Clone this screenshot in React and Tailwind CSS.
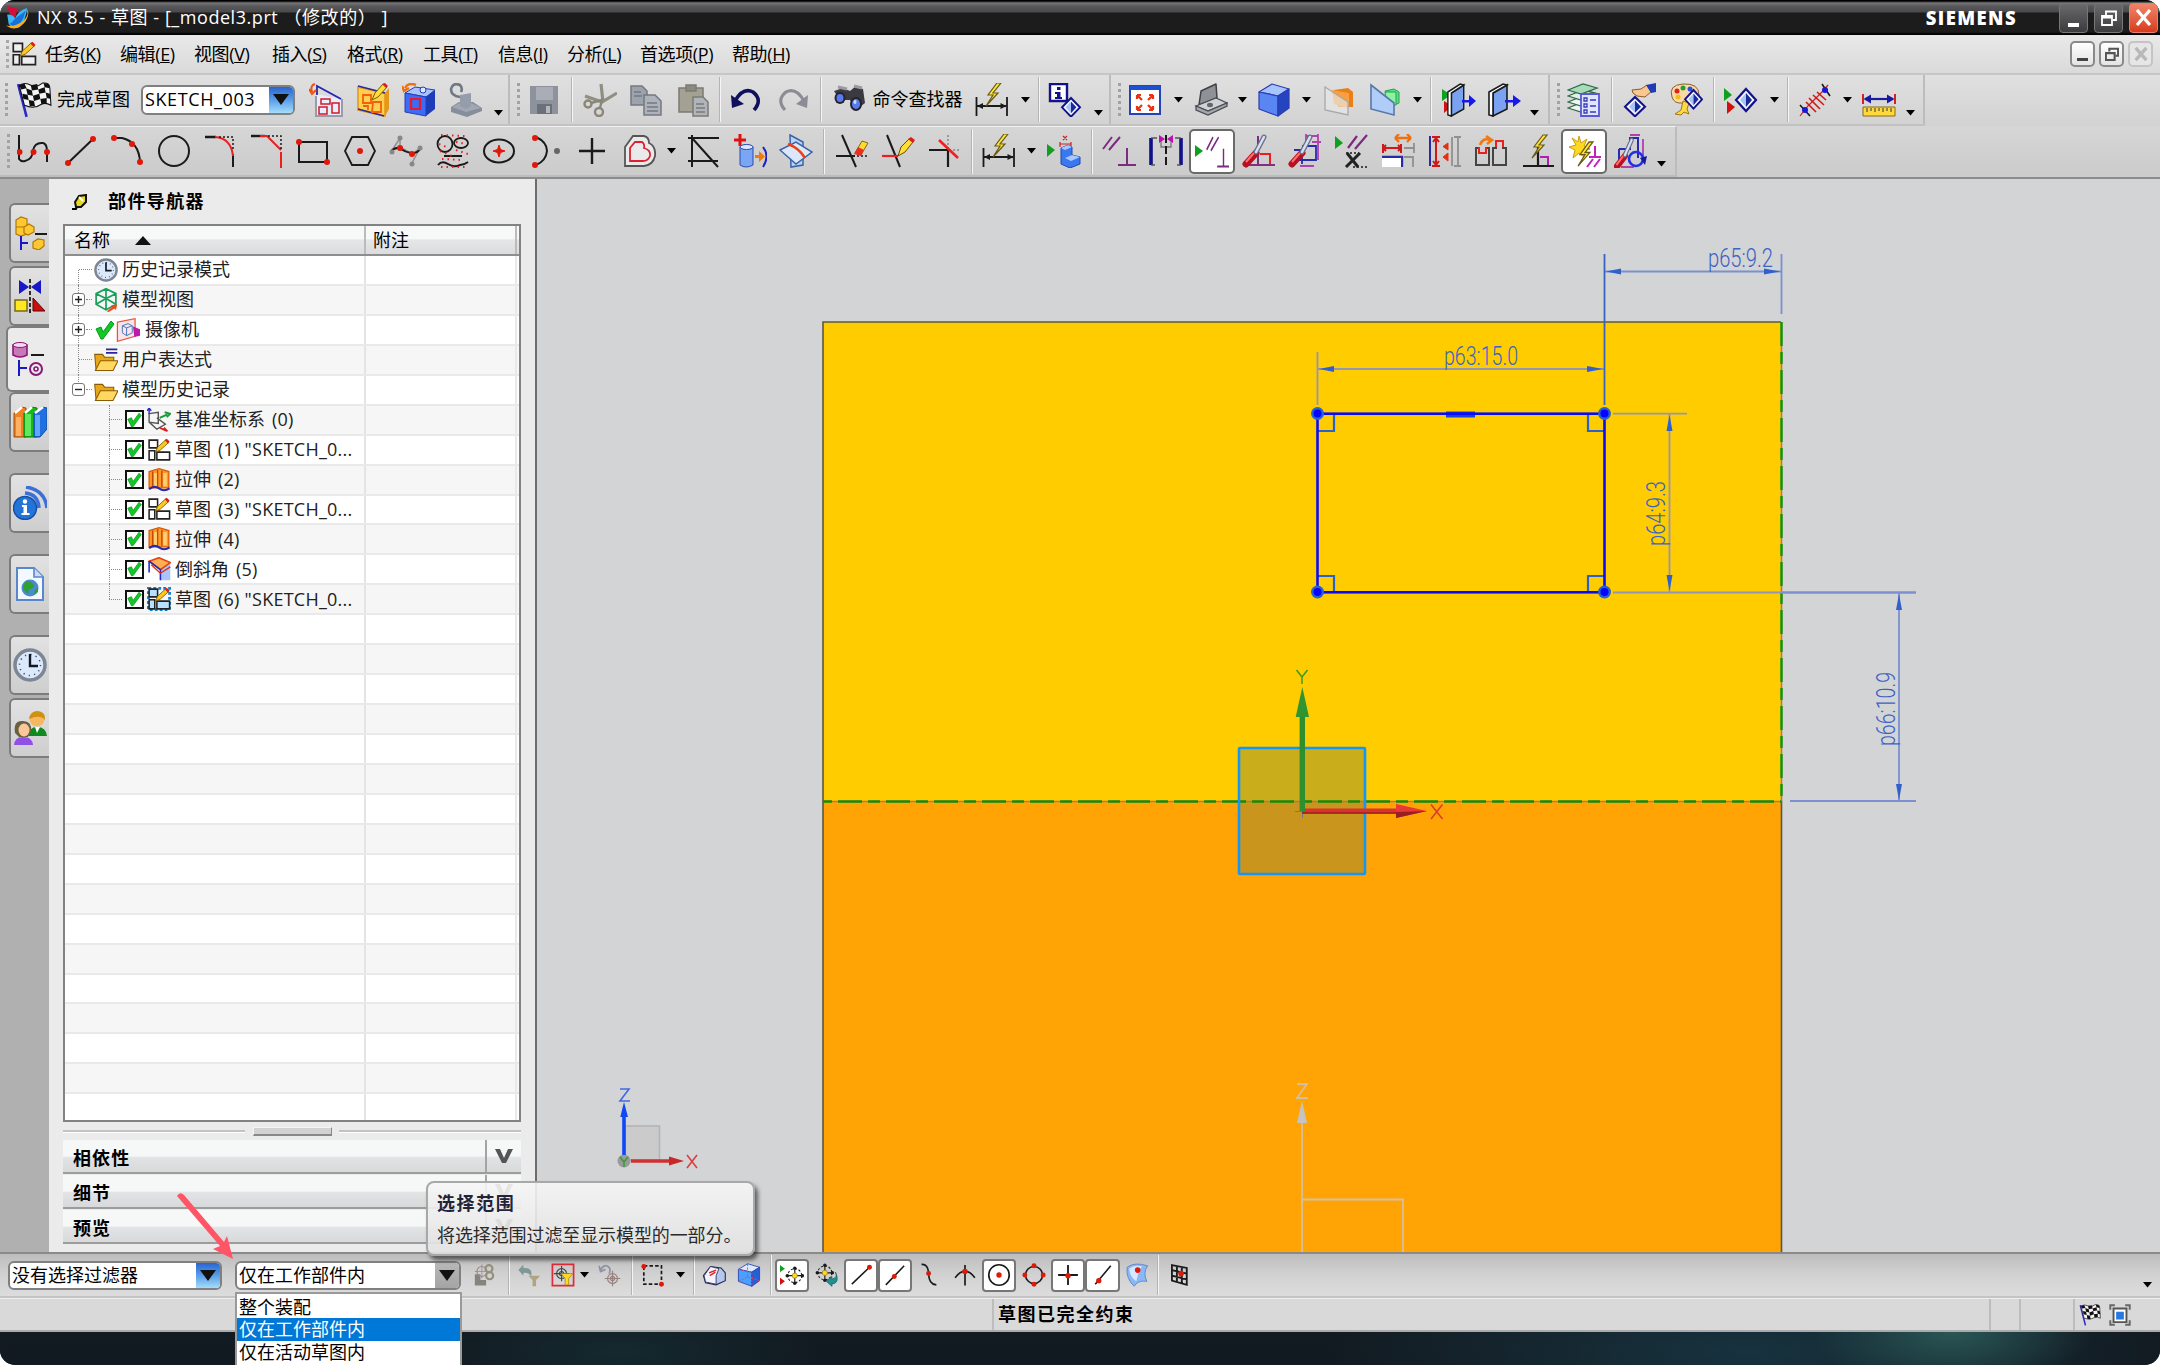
import React from "react";

/* ---------- drawing helpers ---------- */
const Svg = ({ s = 34, className = "", children }) => (
  <svg width={s} height={s} viewBox="0 0 34 34" fill="none" className={"shrink-0 " + className}>
    {children}
  </svg>
);
const Dot = ({ x, y, r = 3, c = "#e01808" }) => <circle cx={x} cy={y} r={r} fill={c} />;
const K = "#1a1a1a";
const Bolt = ({ t }) => (
  <path d="M22 0 L13 12 L18 12 L11 23 L23 10 L18 10 L26 0 Z" fill="#ffe83a" stroke="#6b5a10" strokeWidth="1.2" transform={t} />
);
const Para = ({ t, c = "#7d2a80" }) => (
  <path d="M1 15 L10 3 M7 16 L18 3 M25 14 V31 M16 31 H34" stroke={c} strokeWidth="2" transform={t} />
);
const Diamond = ({ t }) => (
  <g transform={t}>
    <path d="M10 0 L20 11 L10 22 L0 11 Z" fill="#f4f8ff" stroke="#12128a" strokeWidth="2.2" />
    <path d="M10 4 V18 L4 11 Z" fill="#a8c4f4" />
    <path d="M10 4 V18 L16 11 Z" fill="#1a2a9a" />
  </g>
);
const Driver = ({ t }) => (
  <g transform={t}>
    <path d="M4 30 L14 19" stroke="#b81020" strokeWidth="7" strokeLinecap="round" />
    <path d="M4 28 L12 19" stroke="#ff7070" strokeWidth="2" />
    <path d="M14 18 L22 3" stroke="#66708c" strokeWidth="5" strokeLinecap="round" />
    <path d="M14 18 L22 3" stroke="#d8e0f0" strokeWidth="2.5" strokeLinecap="round" />
  </g>
);
const DimBolt = () => (
  <>
    <path d="M1.500 14 V33 M32 14 V33 M2 23 H31" stroke={K} strokeWidth="1.800" />
    <path d="M2 23 L8 20 V26 Z M31.500 23 L25.500 20 V26 Z" fill={K} />
    <Bolt />
  </>
);
const Flag = () => (
  <>
    <path d="M2 2 L10 33" stroke="#2a2ac8" strokeWidth="2.400" />
    <path d="M3 3 Q9 0 14 3 T25 1 Q32 0 32 6 L33 22 Q28 19 24 21 Q17 26 8 22 Z" fill="#f4f4f4" stroke="#111" />
    <path d="M3 3 L8 1.500 L10 6 L5 7 Z M14 3 L20 2 L21 7 L15 8 Z M26 1 L31 2 L32 6 L27 5 Z M9.500 6 L15 8 L16 13 L11 12 Z M21 7 L27 5 L28 10 L22 11 Z M6 11 L11 12 L12 17 L7 16 Z M16 13 L22 11 L23 16 L17 18 Z M28 10 L32 11 L33 16 L29 15 Z M12 17 L17 18 L18 23 L13 23 Z M23 16 L29 15 L29 20 L24 21 Z" fill="#111" />
  </>
);
const SketchGlyph = ({ bg = "#fff", hot }) => (
  <>
    {hot && <path d="M2 2 H32 V32 H2 Z" stroke="#0a84d8" strokeWidth="4" strokeDasharray="4 3" />}
    <path d="M3 3 H15 V14 H3 Z M3 18 H11 V31 H3 Z M14 20 H32 V31 H14 Z" fill={hot ? "#b8e0ff" : bg} stroke="#222" strokeWidth="2.200" />
    <path d="M12 20 L15 13 L26 3 L30 7 L19 17 Z" fill="#ffc820" stroke="#7a5a08" strokeWidth="1.200" />
    <path d="M25 3 L28 1 L32 5 L30 8 Z" fill="#d82020" />
  </>
);
const Clock = () => (
  <>
    <circle cx="17" cy="17" r="15" fill="#dce9fa" stroke="#7d8694" strokeWidth="3.500" />
    <circle cx="17" cy="17" r="10.500" stroke="#3a4a66" strokeWidth="1.500" strokeDasharray="1.200 4.300" />
    <path d="M17 6 V18 H25" stroke="#101828" strokeWidth="2.400" />
  </>
);
const Cube = ({ a = "#a8c4ff", b = "#5a86f4", c = "#2444c0" }) => (
  <g stroke="#2a3cb4" strokeWidth="1.200" strokeLinejoin="round">
    <path d="M2 9 L15 1 L32 6 L21 13 Z" fill={a} />
    <path d="M2 9 L21 13 V33 L2 26 Z" fill={b} />
    <path d="M21 13 L32 6 V25 L21 33 Z" fill={c} />
  </g>
);
const Book = () => (
  <>
    <path d="M5 10 L19 2 V26 L5 33 Z" fill="#7aa2f0" stroke={K} strokeWidth="1.600" />
    <path d="M1 9 L15 1 L19 2 L5 10 V33 L1 32 Z" fill="#fff" stroke={K} strokeWidth="1.600" />
    <path d="M17 17 H25 V12 L33 18 L25 24 V19.500 H17 Z" fill="#1818e8" />
  </>
);
const Target = ({ c = "#8a8a8a" }) => (
  <g stroke={c} strokeWidth="1.600">
    <circle cx="22" cy="22" r="7" />
    <circle cx="22" cy="22" r="3" />
    <path d="M22 11 V33 M11 22 H33" />
  </g>
);
const Compass = ({ t }) => (
  <g transform={t}>
    <circle cx="17" cy="17" r="12" stroke={K} strokeWidth="1.800" strokeDasharray="4 3" />
    <path d="M17 3 V31 M3 17 H31" stroke={K} strokeWidth="2" />
    <Dot x={17} y={4} c={K} /><Dot x={17} y={30} c={K} /><Dot x={4} y={17} c={K} /><Dot x={30} y={17} c={K} />
    <circle cx="17" cy="17" r="4.500" fill="#ffd820" stroke="#8a7010" />
  </g>
);

/* ---------- icons by name ---------- */
const I = {
  reattach: (<>
    <path d="M7 11 V32 H32 V16 Z" fill="#e9edfa" />
    <path d="M7 13 V33 H33 V16" stroke="#9a9aa8" strokeWidth="2" />
    <path d="M8 12 V3 L32 16" stroke="#2424b4" strokeWidth="1.800" />
    <path d="M12 16 H21 V21 H12 Z M23 20 H30 V30 H23 Z M10 24 H18 V31 H10 Z" stroke="#d01828" strokeWidth="1.500" />
    <path d="M6 1 Q1 2 3 9 M0 6 L3 11 L7 7" stroke="#f05010" strokeWidth="2" />
  </>),
  orient: (<>
    <path d="M2 4 L29 10 V33 L2 27 Z" fill="#ffd050" stroke="#e8a020" strokeWidth="1.800" />
    <path d="M2 3 L29 10 M2 26 L28 33" stroke="#2a2a9a" strokeWidth="1.500" />
    <path d="M29 10 L33 5 V26 L29 33 Z" fill="#e89818" />
    <path d="M7 12 H15 V20 H7 Z M7 23 H12 V27 M17 19 H25 V29 H16 Z" stroke="#f06010" strokeWidth="1.800" />
    <path d="M16 17 L19 10 L27 1 L31 4 L22 14 Z" fill="#ffe030" stroke="#7a5a08" />
    <path d="M26 1 L29 0 L32 3 L30 5 Z" fill="#d82020" />
  </>),
  cubeSketch: (<>
    <path d="M3 10 L13 4 L33 7 L24 14 Z" fill="#a8c4ff" stroke="#2a3cb4" />
    <path d="M3 10 L24 14 V33 L3 29 Z" fill="#3a6cf4" stroke="#2a3cb4" />
    <path d="M24 14 L33 7 V26 L24 33 Z" fill="#1c3cb8" />
    <path d="M9 16 H18 V26 H9 Z" stroke="#e81830" strokeWidth="2.200" />
    <path d="M14 2 Q6 -1 3 5 M0 3 L2 8 L7 5" stroke="#f07010" strokeWidth="2.400" />
    <circle cx="21" cy="7" r="3" fill="#d8e8ff" stroke="#2a3cb4" />
  </>),
  stampGray: (<>
    <path d="M2 24 L10 19 H24 L33 25 V28 L18 34 L2 29 Z" fill="#868e9b" />
    <path d="M3 24 L17 29 L32 25 L22 20 H11 Z" fill="#a0a8b4" />
    <path d="M11 12 L22 10 V23 L17 26 L11 23 Z" fill="#959dab" />
    <path d="M11 14 Q2 13 2 6 Q4 -1 11 2 Q14 5 12 9" stroke="#6f7784" strokeWidth="2.600" />
  </>),
  save: <><path d="M3 3 H31 V31 H3 Z" fill="#8d929c" /><path d="M9 4 H26 V17 H9 Z" fill="#a9adb6" /><path d="M10 21 H25 V31 H10 Z" fill="#6c7179" /><path d="M19 23 H23 V30 H19 Z" fill="#b4b8be" /></>,
  cut: (<>
    <path d="M18 1 L20 19 M34 10 L19 19 L2 13" stroke="#8f8f84" strokeWidth="3.200" />
    <circle cx="5" cy="21" r="3.500" stroke="#8a8778" strokeWidth="2.400" /><circle cx="16" cy="29" r="4" stroke="#8a8778" strokeWidth="2.400" />
    <path d="M8 20 L19 17 L17 25" stroke="#8a8778" strokeWidth="2.400" />
  </>),
  copy: <g stroke="#74797f" strokeWidth="1.500"><path d="M2 3 H13 L18 8 V22 H2 Z" fill="#9ca2ae" /><path d="M15 12 H26 L32 18 V32 H15 Z" fill="#adb2bc" /><path d="M18 20 H28 M18 24 H29 M18 28 H29 M5 9 H12 M5 13 H13" /></g>,
  paste: <g stroke="#7b7b70" strokeWidth="1.500"><path d="M3 5 H27 V29 H3 Z" fill="#a3a193" /><path d="M10 2 H20 V8 H10 Z" fill="#8b8a80" /><path d="M17 14 H27 L32 19 V33 H17 Z" fill="#b0b4bc" /><path d="M20 21 H28 M20 25 H29 M20 29 H29" /></g>,
  undo: <><path d="M6 18 Q14 4 24 9 Q34 17 25 27" stroke="#10105c" strokeWidth="3.600" /><path d="M2 12 L3 25 L15 21 Z" fill="#10105c" /></>,
  redo: <><path d="M28 18 Q20 4 10 9 Q0 17 9 27" stroke="#8c8c96" strokeWidth="3.200" /><path d="M32 12 L31 25 L20 21 Z" fill="#8c8c96" /></>,
  binoc: (<>
    <path d="M2 8 L11 5 L18 8 L24 3 L31 6 L33 20 L24 27 L18 17 L8 17 Z" fill="#3a3a40" />
    <path d="M6 4 L15 6 M22 3 L30 5" stroke="#9a9aa0" strokeWidth="3" />
    <ellipse cx="8" cy="15" rx="5.500" ry="6" fill="#23232c" /><ellipse cx="8" cy="15" rx="3.500" ry="4" fill="#5a7af0" />
    <ellipse cx="24" cy="21" rx="6" ry="7" fill="#23232c" /><ellipse cx="24" cy="21" rx="4" ry="5" fill="#5a7af0" /><ellipse cx="23" cy="19" rx="1.500" ry="2" fill="#cfdcff" />
  </>),
  dimBolt: <DimBolt />,
  info: <><path d="M2 1 H19 V18 H2 Z" fill="#fff" stroke="#12128a" strokeWidth="2.400" /><path d="M9 4 H12.500 V7 H9 Z M7 9 H12.500 V14 H14 V16 H7 V14 H9 V11 H7 Z" fill="#12128a" /><Diamond t="translate(14 15) scale(.9 .85)" /></>,
  fit: (<>
    <path d="M2 3 H32 V31 H2 Z" fill="#fff" stroke="#2344b8" strokeWidth="2" /><path d="M2 3 H32 V7 H2 Z" fill="#1c50d0" />
    <path d="M9 12 L14 17 M9 12 h4 M9 12 v4 M25 12 L20 17 M25 12 h-4 M25 12 v4 M9 27 L14 22 M9 27 h4 M9 27 v-4 M25 27 L20 22 M25 27 h-4 M25 27 v-4" stroke="#f03010" strokeWidth="2.200" />
  </>),
  clip: (<>
    <path d="M5 22 L7 8 L22 1 L23 15 Z" fill="#8e9296" stroke="#3e4248" strokeWidth="1.500" strokeLinejoin="round" />
    <path d="M2 23 L22 15 L33 20 L14 28 Z" fill="#cfd2d6" stroke="#4a4e54" strokeWidth="1.300" />
    <path d="M2 23 L14 28 L33 20 V23 L14 32 L2 27 Z" fill="#a4a8ad" stroke="#4a4e54" strokeWidth="1.300" />
    <ellipse cx="16" cy="22" rx="3" ry="2.200" fill="#666" />
  </>),
  cube: <Cube />,
  planeOrange: (<>
    <path d="M12 7 L26 5 L31 9 V24 H16 Z" fill="#e88018" /><path d="M10 7 L27 10 V25 L12 21 Z" fill="#f8a040" />
    <path d="M3 4 L26 19 V32 L3 27 Z" fill="#e8e8e8" fillOpacity=".65" stroke="#a8a8a8" strokeWidth="1.300" />
  </>),
  planeGreen: (<>
    <path d="M17 8 L26 6 L31 9 V20 L22 24 Z" fill="#58e080" stroke="#28a050" /><path d="M17 9 H28 V22 H19 Z" fill="#8af4a4" stroke="#28a050" />
    <path d="M3 2 L26 20 V32 L3 26 Z" fill="#b0ccf8" stroke="#5878a8" strokeWidth="1.600" />
  </>),
  bookPlay: <><path d="M0 6 L9 12 L0 18 Z" fill="#10a020" /><path d="M2 18 L10 23 L2 30 Z" fill="#d01010" /><g transform="translate(5 0) scale(.88 1)"><Book /></g></>,
  book: <Book />,
  layers: (<>
    <g stroke="#2f6a48" strokeWidth="1.300"><path d="M1 25 L16 19 L28 22 L14 29 Z" fill="#eef6f0" /><path d="M1 19 L16 13 L28 16 L14 23 Z" fill="#eef6f0" /><path d="M1 13 L16 7 L28 10 L14 17 Z" fill="#dff0e4" /><path d="M1 7 L16 1 L30 5 L14 11 Z" fill="#a8dcb8" /></g>
    <path d="M14 11 H32 V33 H14 Z" fill="#e0e6ff" stroke="#5858d8" strokeWidth="1.800" />
    <path d="M17 15 h3 v3 h-3 Z M17 21 h3 v3 h-3 Z M17 27 h3 v3 h-3 Z M23 17 h6 M23 23 h6 M23 29 h6" stroke="#3a3ab8" strokeWidth="1.300" />
  </>),
  hand: <><path d="M9 7 L18 6 L24 2 L29 8 L22 14 L14 13 L10 10 Z" fill="#f8c890" stroke="#8a5a2a" /><path d="M23 2 L33 0 V9 L28 10 Z" fill="#1c3cb8" /><Diamond t="translate(2 14) scale(1 .88)" /></>,
  palette: (<>
    <path d="M3 14 Q-1 2 14 1 Q30 0 30 12 Q27 18 22 16 Q16 16 14 20 Q5 21 3 14 Z" fill="#fbd9a4" stroke="#8a6030" />
    <Dot x={8} y={8} c="#e02020" r={2.500} /><Dot x={14} y={5} c="#20a030" r={2.500} /><Dot x={21} y={6} c="#2850e0" r={2.500} /><Dot x={9} y={14} c="#f0c010" r={2.500} />
    <path d="M14 18 L20 20 L18 26 L20 31 L15 29 L12 32 L6 31 L12 27 Z" fill="#ffd840" stroke="#a07810" />
    <Diamond t="translate(16 7) scale(.85 .85)" />
  </>),
  playDia: <><path d="M0 5 L8 12 L0 18 Z" fill="#10a020" /><path d="M3 18 L11 24 L3 31 Z" fill="#d01010" /><Diamond t="translate(12 6)" /></>,
  curveRed: (<>
    <path d="M2 33 L10 23 L24 9 L30 2" stroke="#e01818" strokeWidth="1.200" /><path d="M8 19 L18 29 M11 15 L22 26 M15 12 L26 22 M19 9 L28 17" stroke="#d01818" strokeWidth="1.600" />
    <path d="M2 22 L12 33 M24 1 L32 13" stroke={K} strokeWidth="1.600" /><Dot x={7} y={27} c="#1818d8" /><Dot x={27} y={7} c="#1818d8" />
  </>),
  ruler: (<>
    <path d="M1 11 V21 M33 11 V21" stroke="#d01010" strokeWidth="1.800" /><path d="M3 16 H31" stroke="#1818a0" strokeWidth="2.200" /><path d="M1.500 16 L9 11.500 V20.500 Z M32.500 16 L25 11.500 V20.500 Z" fill="#1818a0" />
    <path d="M1 24 H33 V33 H1 Z" fill="#ffd83a" stroke="#8a6a10" /><path d="M5 25 v4 M9 25 v3 M13 25 v4 M17 25 v3 M21 25 v4 M25 25 v3 M29 25 v4" stroke="#333" />
  </>),
  profile: <><path d="M2 1 V25 Q4 28 8 27 Q16 25 16 16 Q18 8 26 9 Q30 10 30 17 V28" stroke={K} strokeWidth="2" /><Dot x={2.500} y={18} /><Dot x={16.500} y={18} /><Dot x={30} y={18} /></>,
  line: <><path d="M4 29 L29 5" stroke={K} strokeWidth="2" /><Dot x={4} y={29} /><Dot x={29} y={5} /></>,
  arc: <><path d="M3 4 H12 Q29 8 30 28" stroke={K} strokeWidth="2" /><Dot x={4} y={4} /><Dot x={22} y={10} /><Dot x={30} y={28} /></>,
  circle: <circle cx="17" cy="17" r="15" stroke={K} strokeWidth="2" />,
  fillet: <><path d="M2 3 H13" stroke={K} strokeWidth="2.400" /><path d="M30 20 V33" stroke={K} strokeWidth="2" /><path d="M12 3 Q28 4 30 22" stroke="#e82020" strokeWidth="2" /><path d="M16 3 H30 V15" stroke={K} strokeWidth="1.500" strokeDasharray="2 2" /></>,
  chamfer: <><path d="M1 2 H15" stroke={K} strokeWidth="2.400" /><path d="M31 18 V34" stroke="#e82020" strokeWidth="2" /><path d="M10 2 H17 L31 16" stroke="#e82020" strokeWidth="2" /><path d="M18 2 H31 V15" stroke={K} strokeWidth="1.500" strokeDasharray="2 2" /></>,
  rect: <><path d="M3 8 H31 V28 H3 Z" stroke={K} strokeWidth="2" /><Dot x={3} y={8} /><Dot x={31} y={28} /></>,
  hex: <><path d="M9 3 H25 L32 17 L25 31 H9 L2 17 Z" stroke={K} strokeWidth="1.800" /><Dot x={17} y={17} /></>,
  spline: <><path d="M2 18 L11 4 L11 13 L23 20 L31 14 L23 29" stroke="#909090" strokeWidth="1.500" /><path d="M2 17 Q8 12 12 15 T22 19 T32 14" stroke={K} strokeWidth="2" /><Dot x={11} y={14} /><Dot x={23} y={20} /><Dot x={11} y={4} c="#888" r={2.500} /><Dot x={31} y={14} c="#888" r={2.500} /><Dot x={23} y={30} c="#888" r={2.500} /><Dot x={3} y={18} c="#888" r={2.500} /></>,
  fitCurve: <><ellipse cx="9" cy="10" rx="7.500" ry="8" stroke={K} strokeWidth="1.800" /><ellipse cx="25" cy="9" rx="7" ry="5" stroke={K} strokeWidth="1.800" /><path d="M8 22 H26 M2 31 Q6 26 12 30 T24 31 Q28 31 32 28" stroke={K} strokeWidth="2" /><path d="M5 1 l24 1 M3 10 l10 4 M20 8 l10 2 M4 17 l12 5 M20 16 l12 4 M6 25 l20 1 M5 33 l26 0" stroke="#e82020" strokeWidth="2" strokeDasharray="1.500 4" /></>,
  ellipse: <><ellipse cx="17" cy="17" rx="15" ry="11.500" stroke={K} strokeWidth="2" /><path d="M17 11 L18.500 15.500 L23 17 L18.500 18.500 L17 23 L15.500 18.500 L11 17 L15.500 15.500 Z" fill="#e01808" stroke="#e01808" /></>,
  conic: <><path d="M7 3 Q18 8 18 17 Q17 27 7 31" stroke={K} strokeWidth="2" /><Dot x={6} y={4} /><Dot x={6} y={31} /><Dot x={28} y={17} c="#666" /></>,
  plus: <path d="M17 4 V30 M4 17 H30" stroke={K} strokeWidth="2.400" />,
  offset: <><path d="M3 32 V13 L11 2 H22 Q27 3 27 9 Q34 12 33 22 Q31 31 22 32 Z" fill="#eaeaea" stroke="#555" strokeWidth="1.800" /><path d="M8 27 V14 L13 8 H20 Q23 10 22 14 Q29 16 28 22 Q26 27 21 27 Z" stroke="#e02030" strokeWidth="1.800" /></>,
  pattern: <path d="M6 1 V33 M2 4 H33 M2 27 H32 M6 4 L32 33" stroke={K} strokeWidth="2" />,
  mirrorPlus: <><path d="M7 0 V12 M1 6 H13" stroke="#e01010" strokeWidth="3" /><path d="M7 13 Q13 9 20 13 V31 Q13 35 7 31 Z" fill="#7aa6f4" stroke="#2a4ab0" /><ellipse cx="13.500" cy="13" rx="6.500" ry="2.500" fill="#dce8ff" stroke="#2a4ab0" /><path d="M22 21 H26 V17 L32 22.500 L26 28 V24 H22 Z" fill="#f07a10" /><path d="M30 13 Q37 22 30 33" stroke="#2020c0" strokeWidth="2" /></>,
  intersect: <><path d="M11 1 L24 8 V31 L12 33 Z" fill="#b8d4f8" stroke="#3a64a8" strokeWidth="1.500" /><path d="M1 16 L17 8 L33 18 L17 30 Z" fill="#dce8fa" stroke="#3a64a8" strokeWidth="1.500" /><path d="M9 10 Q20 14 26 24" stroke="#f04010" strokeWidth="2.600" /></>,
  trim: <><path d="M7 1 L21 33 M1 22 H20" stroke={K} strokeWidth="2" /><path d="M22 22 H34" stroke={K} strokeWidth="1.500" strokeDasharray="2 2" /><path d="M20 19 L27 7 L33 9 L26 21 Z" fill="#ffd830" stroke="#8a6a10" /><path d="M19 20 L23 13 L29 16 L26 22 Z" fill="#e83020" /></>,
  extend: <><path d="M6 1 L19 33" stroke={K} strokeWidth="2" /><path d="M1 22 H17" stroke="#e82020" strokeWidth="2.200" /><path d="M17 22 L20 13 L28 5 L32 8 L24 18 Z" fill="#ffe030" stroke="#6a4a08" /><path d="M27 5 L30 3 L34 6 L32 9 Z" fill="#d82020" /></>,
  corner: <><path d="M1 16 H20 M20 16 V33" stroke={K} strokeWidth="2.200" /><path d="M20 1 V16 H32" stroke="#888" strokeWidth="1.500" strokeDasharray="2 2" /><path d="M11 6 L30 24" stroke="#f02020" strokeWidth="2.600" /></>,
  dimPart: <><path d="M0 10 L8 16 L0 23 Z" fill="#10a020" /><path d="M13 10 H24 M13 8 v5 M24 8 v5 M16 2 l4 4 M20 2 l-4 4" stroke="#d02020" strokeWidth="1.200" /><path d="M14 14 L21 11 L25 13 V21 L33 23 V30 L23 34 L14 30 Z" fill="#3a78f0" stroke="#1c48b0" strokeLinejoin="round" /><path d="M14 14 L21 11 L25 13 L18 16 Z M18 24 L25 21 L33 23 L24 27 Z" fill="#a8c8ff" /></>,
  para: <Para />,
  sym: <><path d="M2 4 V31 M32 4 V31" stroke="#10108a" strokeWidth="3.600" /><path d="M2 4 H8 M26 4 H32 M2 31 H6 M28 31 H32" stroke="#555" strokeWidth="1.500" /><path d="M12 4 V13 H22 V4" stroke="#777" strokeWidth="1.300" /><path d="M17 1 V34" stroke={K} strokeWidth="2" strokeDasharray="8 3" /><path d="M10 1 L16 5 L10 9 Z M24 1 L18 5 L24 9 Z" fill="#c010b0" /></>,
  paraPlay: <><path d="M0 11 L8 17 L0 23 Z" fill="#10a020" /><Para t="translate(11 0) scale(.7 1.050)" /></>,
  driverAngle: <><path d="M16 2 V31 M2 31 H33" stroke="#803080" strokeWidth="2" /><path d="M18 20 H28 V30" stroke="#e82020" strokeWidth="2" /><Driver /></>,
  driverDim: <><path d="M6 16 H14 V30 M14 12 H28 V26 H6" stroke="#2a2ab0" strokeWidth="1.800" /><path d="M18 2 H30 M18 0 v8 M30 0 V26 M24 8 H33 M12 32 H26" stroke="#b040b0" strokeWidth="1.800" /><Driver /></>,
  paraX: <><path d="M0 2 L8 9 L0 15 Z" fill="#10a020" /><path d="M13 14 L22 2 M20 15 L32 1" stroke="#7d2a80" strokeWidth="2.200" /><path d="M12 19 L23 33 M25 19 L11 33" stroke="#222" strokeWidth="3" /><path d="M11 19 H24 M18 33 H34" stroke={K} strokeDasharray="2 2" strokeWidth="1.500" /></>,
  dimAlt: <><path d="M14 4 H30 M14 4 l4 -4 M14 4 l4 4 M30 4 l-4 -4 M30 4 l-4 4" stroke="#f07010" strokeWidth="2.400" /><path d="M2 10 V19 M20 10 V19 M2 14 H20 M5 11 l-3 3 l3 3 M17 11 l3 3 l-3 3" stroke="#d01818" strokeWidth="2" /><path d="M1 23 H21 V33" stroke="#2a2aa8" strokeWidth="2.400" /><path d="M1 24 H20 V33 H1 Z" fill="#fff" /><path d="M23 14 H33 M33 9 V19 M23 23 H32 V33" stroke="#909090" strokeWidth="1.800" /></>,
  dimVert: <><path d="M2 2 V32" stroke="#2a2aa8" strokeWidth="2" /><path d="M4 3 H12 M4 32 H12 M8 3 V32 M5 8 l3 -4 l3 4 M5 27 l3 4 l3 -4" stroke="#d01818" strokeWidth="2" /><path d="M20 9 V16 L15 12.500 Z M20 19 V27 L15 23 Z" fill="#e83010" stroke="#e83010" /><path d="M26 3 H33 M26 32 H33 M30 3 V32 M24 3 V32" stroke="#909090" strokeWidth="1.800" /></>,
  shapes: <><path d="M2 14 H5 V19 H12 V14 H15 V31 H2 Z M19 31 V14 H22 V7 H29 V14 H32 V31 Z" stroke="#444" strokeWidth="2" /><path d="M5 13 V19 H12 V13 M22 13 V7 H29 V13" stroke="#e82020" strokeWidth="2" /><path d="M6 11 Q9 3 16 6 M12 2 L18 6 L13 10" stroke="#f07a10" strokeWidth="2.600" /></>,
  boltAngle: <><path d="M2 32 H33 M17 12 V32" stroke={K} strokeWidth="2.200" /><path d="M19 23 H27 V31" stroke="#b020b0" strokeWidth="2" /><Bolt t="translate(0 1)" /></>,
  sun: <><path d="M12 2 L14 9 L20 5 L17 12 L23 15 L16 17 L18 24 L12 19 L6 24 L8 16 L2 13 L9 11 L5 4 L11 8 Z" fill="#ffd820" stroke="#c8a010" /><Bolt t="translate(0 8) scale(1 1.050)" /><path d="M28 12 V23 M22 23 H34 M20 33 L26 25 M27 33 L33 25" stroke="#c020c0" strokeWidth="2" /></>,
  driverCirc: <><path d="M5 15 V30 M5 15 H16 V4 H24 V24" stroke="#2a2ab0" strokeWidth="2" /><path d="M16 1 H26 M29 5 V28 M7 33 H20" stroke="#b040b0" strokeWidth="1.800" /><circle cx="22" cy="25" r="7" stroke="#2030e8" strokeWidth="2.600" /><path d="M26 24 L33 22 L31 31 Z" fill="#1818a0" /><Driver t="translate(-1 3) scale(.85 1)" /></>,
  selGray: <><path d="M4 16 H12 V24 H20 V32 H4 Z" fill="#85857f" /><circle cx="14" cy="12" r="7" stroke="#a08888" strokeWidth="1.500" /><path d="M14 2 V22 M4 12 H24" stroke="#998080" /><circle cx="24" cy="8" r="5" stroke="#94907c" strokeWidth="3" /><circle cx="25" cy="18" r="5" stroke="#94907c" strokeWidth="3" /></>,
  funnelGray: <><path d="M2 10 L9 2 V7 Q23 6 20 19 Q17 13 9 14 V18 Z" fill="#7f9895" /><path d="M16 18 H33 L27 24 V33 H22 V24 Z" fill="#b0a484" /></>,
  funnelRed: <><path d="M2 2 H32 V32 H2 Z" stroke="#e02838" strokeWidth="2.400" /><g transform="translate(-7 -7)"><Target c="#444" /></g><path d="M14 15 H31 L25 22 V31 H20 V22 Z" fill="#ffd820" stroke="#a08010" /></>,
  undoTarget: <><path d="M5 10 Q10 0 17 6 Q20 10 17 15 M3 4 L5 12 L12 9" stroke="#9090a4" strokeWidth="2.400" /><Target c="#988080" /></>,
  marquee: <><path d="M4 4 H29 V30 H4 Z" stroke={K} strokeWidth="2.400" strokeDasharray="5 3" /><Dot x={4} y={5} r={3.500} /><Dot x={29} y={30} r={3.500} /></>,
  solidA: <><path d="M2 18 L12 5 L27 7 L33 14 V25 L20 31 L5 28 Z" fill="#b4c8ec" stroke="#2a2a5a" strokeWidth="1.600" /><path d="M3 18 L12 5 L24 8 L20 18 V30 L5 27 Z" fill="#f2f4fc" stroke="#2a2a5a" strokeWidth="1.200" /><path d="M10 14 L20 10 M11 18 L19 13" stroke="#e02020" strokeWidth="2" /></>,
  solidB: <><Cube a="#d8ecff" b="#4aa0ff" c="#2460d8" /><path d="M2 9 L21 13 V33 M2 26 L15 20 V1 M15 20 L32 25" stroke="#e04868" strokeWidth="1.400" strokeDasharray="3 2" /></>,
  snapOn: <><path d="M0 3 L7 8 L0 13 Z" fill="#10a020" /><path d="M0 21 L7 26 L0 31 Z" fill="#d01010" /><Compass t="translate(7 4) scale(.82)" /></>,
  snapRot: <><Compass t="translate(0 0) scale(.82)" /><path d="M16 26 L24 19 V23 Q33 20 29 13 Q36 28 24 30 V33 Z" fill="#209090" stroke="#106060" /></>,
  snapEnd: <><path d="M4 30 L29 6" stroke={K} strokeWidth="2.200" /><Dot x={29} y={6} r={3.500} /></>,
  snapMid: <><path d="M4 31 L30 4" stroke={K} strokeWidth="2.200" /><Dot x={16} y={19} r={3.500} /></>,
  snapCtrl: <><path d="M5 2 Q14 1 15 14 Q15 30 26 31" stroke={K} strokeWidth="2.400" /><Dot x={15} y={15} r={3.500} /></>,
  snapInt: <><path d="M17 3 V32 M3 21 Q17 2 31 21" stroke={K} strokeWidth="2.400" /><Dot x={17} y={12} r={3.800} /></>,
  snapCen: <><circle cx="17" cy="17" r="14.500" stroke={K} strokeWidth="2.400" /><Dot x={17} y={17} r={3.800} /></>,
  snapQuad: <><circle cx="17" cy="17" r="12" stroke={K} strokeWidth="2.200" /><Dot x={17} y={4} r={3.500} /><Dot x={17} y={30} r={3.500} /><Dot x={4} y={17} r={3.500} /><Dot x={30} y={17} r={3.500} /></>,
  snapPt: <><path d="M17 3 V31 M3 17 H31" stroke={K} strokeWidth="2.600" /><Dot x={17} y={18} r={3.800} /></>,
  snapCrv: <><path d="M6 30 L28 4" stroke={K} strokeWidth="2.200" /><Dot x={11} y={25} r={3.800} /></>,
  snapFace: <><path d="M3 6 Q14 -2 32 4 Q25 14 31 26 Q18 24 13 33 Q1 22 3 6 Z" fill="#8ab8f4" stroke="#4a74c0" /><path d="M6 8 Q14 2 24 5 Q18 14 16 26 Q7 20 6 8 Z" fill="#d8e8ff" /><Dot x={18} y={10} r={4} /></>,
  gridPt: <><path d="M7 3 L28 7 V31 L7 25 Z M7 10 L28 15 M7 18 L28 23 M14 4 V27 M21 6 V29" stroke={K} strokeWidth="2.600" /><Dot x={20} y={15} r={4} /></>,
};

/* ---------- toolbar pieces ---------- */
const Ico = ({ n, on }) => (
  <div className="flex w-[46.5px] shrink-0 items-center justify-center">
    <div className={on ? "flex h-[45px] w-[46px] shrink-0 items-center justify-center rounded-[5px] border-2 border-[#6a6a6a] bg-white" : "flex"}>
      <Svg>{I[n]}</Svg>
    </div>
  </div>
);
const Tri = ({ low, w = "w-[18px]" }) => (
  <div className={"flex shrink-0 justify-center " + w + (low ? " items-end pb-2" : " items-center")}>
    <svg width="9" height="6" viewBox="0 0 9 6"><path d="M0 0 H9 L4.500 5.500 Z" fill="#000" /></svg>
  </div>
);
const Sep = ({ w = "w-[9px]" }) => (
  <div className={"flex shrink-0 items-center justify-center " + w}>
    <div className="h-[45px] w-[2px] border-l border-[#b4b4b4] bg-[#f6f6f6]" />
  </div>
);
const Grip = ({ w = "w-[11px]" }) => (
  <div className={"flex shrink-0 items-center justify-end " + w}>
    <div className="flex h-[34px] w-[4px] flex-col justify-between">
      {[0, 1, 2, 3, 4, 5].map((i) => <i key={i} className="block h-[3px] w-[3px] bg-[#a2a2a2]" />)}
    </div>
  </div>
);
const Group = ({ w, children }) => (
  <div className={"flex h-full shrink-0 border-r-2 border-[#bcbcbc] " + w}>{children}</div>
);
const many = (list) => list.split(" ").map((n) => <Ico key={n} n={n} />);

const Combo = ({ w, text, blue, tight }) => (
  <div className={"flex shrink-0 overflow-hidden rounded-[6px] border-2 border-[#808080] bg-white " + w}>
    <span className={"min-w-0 flex-1 overflow-hidden whitespace-nowrap pl-[2px] text-[18px] leading-[25px] text-black " + (tight || "")}>{text}</span>
    <span className={"flex w-[24px] items-center justify-center " + (blue ? "bg-linear-to-b from-[#2a64d0] via-[#5a9ee8] to-[#a4dcfa]" : "bg-linear-to-b from-[#b8b8b8] to-[#a4a4a4]")}>
      <svg width="16" height="11" viewBox="0 0 16 11"><path d="M0 0 H16 L8 11 Z" fill="#111" /></svg>
    </span>
  </div>
);

const menus = [
  ["任务", "K", "w-[75px]"], ["编辑", "E", "w-[74px]"], ["视图", "V", "w-[78px]"], ["插入", "S", "w-[75px]"], ["格式", "R", "w-[76px]"],
  ["工具", "T", "w-[75px]"], ["信息", "I", "w-[69px]"], ["分析", "L", "w-[73px]"], ["首选项", "P", "w-[92px]"], ["帮助", "H", "w-[75px]"],
];

/* ---------- resource bar ---------- */
const sideIcons = {
  asm: <><g fill="#ffc830" stroke="#b07808" strokeWidth="1.200"><path d="M3 4 L8 1 L14 3 V18 L8 20 L3 18 Z" /><path d="M3 11 L14 11" /><path d="M11 11 L16 8 L21 11 V16 L15 19 L11 17 Z" /><path d="M20 26 L25 23 L31 24 V30 L26 34 L20 32 Z" /></g><path d="M22 18 H34" stroke={K} strokeWidth="2" /><path d="M8 20 V34 M8 27 H15" stroke="#1818c8" strokeWidth="2" /></>,
  cons: <><path d="M6 1 L16 8 L6 15 Z M28 1 L18 8 L28 15 Z" fill="#1818c8" /><path d="M17 0 V34" stroke={K} strokeWidth="1.800" strokeDasharray="4 2" /><path d="M2 21 H14 V32 H2 Z" fill="#ffe820" stroke="#7a6a10" strokeWidth="1.500" /><path d="M20 19 L32 32 H20 Z" fill="#c81010" stroke="#600" /></>,
  part: <><path d="M2 3 Q9 -1 16 3 V13 Q9 17 2 13 Z" fill="#c878b8" stroke="#8a1878" strokeWidth="1.600" /><ellipse cx="9" cy="3" rx="7" ry="2.500" fill="#f4d8ee" stroke="#8a1878" /><path d="M20 13 H33" stroke={K} strokeWidth="2" /><path d="M8 18 V34 M8 26 H16" stroke="#1818c8" strokeWidth="2" /><circle cx="25" cy="27" r="6" stroke="#8a1878" strokeWidth="2" /><circle cx="25" cy="27" r="2" stroke="#8a1878" strokeWidth="1.600" /></>,
  books: <><path d="M1 8 L8 2 L13 3 V32 H1 Z" fill="#f08020" stroke="#a04a08" /><path d="M3 12 H8 V31 H3 Z" fill="#ffb060" /><path d="M11 8 L18 2 L24 3 V32 H11 Z" fill="#18b818" stroke="#087808" /><path d="M12 9 H18 V31 H12 Z" fill="#60e860" /><path d="M21 8 L29 2 L34 3 V24 L27 32 H21 Z" fill="#2070e0" stroke="#1048a0" /><path d="M22 10 H27 V31 H22 Z" fill="#60a8ff" /><path d="M2 8 L9 2 M12 8 L19 2 M22 8 L30 2" stroke="#fff" strokeWidth="2.500" /></>,
  info: <><path d="M12 7 Q25 8 26 22 M13 1 Q32 4 34 22" stroke="#3a70d8" strokeWidth="3.600" /><circle cx="12" cy="22" r="11.500" fill="#2474d8" stroke="#1450a8" strokeWidth="1.500" /><circle cx="12" cy="15.500" r="2.200" fill="#fff" /><path d="M9 19 H14 V27 H16.500 V29 H8.500 V27 H10.500 V21 H9 Z" fill="#fff" /></>,
  web: <><path d="M4 1 H21 L30 10 V33 H4 Z" fill="#f4f9ff" stroke="#5a86d0" strokeWidth="2" /><path d="M21 1 V10 H30" fill="#c8dcf8" stroke="#5a86d0" strokeWidth="1.600" /><circle cx="17" cy="21" r="8.500" fill="#4a88d8" /><path d="M12 15 Q17 12 20 17 Q23 20 18 22 Q14 22 16 27 Q10 24 10 20 Z M22 23 l3 -3 l0 5 l-4 3 Z" fill="#30a030" /></>,
  clock: <Clock />,
  people: <><circle cx="24" cy="8" r="7.500" fill="#f4b860" /><path d="M16 8 Q17 0 25 0 Q33 1 32 9 Q27 3 16 8 Z" fill="#d09010" /><path d="M15 25 Q16 16 24 16 Q33 16 34 25 Z" fill="#108a20" /><path d="M22 16 L24 22 L27 16 Z" fill="#fff" /><path d="M2 22 Q0 9 10 10 Q19 10 18 20 L15 26 H6 Z" fill="#6a6040" /><ellipse cx="11" cy="19" rx="5.500" ry="6.500" fill="#f8c898" /><path d="M1 34 Q2 25 11 26 Q19 26 20 34 Z" fill="#9050e8" /></>,
};
const SideTab = ({ n, cls = "", active }) => (
  <div className={"flex shrink-0 items-center justify-center rounded-l-[6px] border-2 border-r-0 border-[#7c7c7c] pr-px " + (active ? "h-[66px] w-[43px] bg-[#ebebeb] " : "h-[60px] w-[40px] bg-linear-to-b from-[#e2e2e2] to-[#cecece] ") + cls}>
    <Svg>{sideIcons[n]}</Svg>
  </div>
);

/* ---------- part navigator ---------- */
const treeIcons = {
  clock: <Clock />,
  views: <><path d="M17 1 L31 8 V23 L17 31 L3 23 V8 Z M17 1 V31 M3 8 L17 15 L31 8 M3 23 L17 15 L31 23" stroke="#18a058" strokeWidth="2.400" /><path d="M18 33 L26 27 L24 25 L33 23 L31 31 L29 29 L21 34 Z" fill="#f04818" /></>,
  camera: <><path d="M2 6 L27 1 V26 L2 33 Z" fill="#f8e4ec" stroke="#e85838" strokeWidth="1.800" /><path d="M9 11 L17 8 L23 11 V21 L15 25 L9 21 Z M9 11 L15 14 L23 11 M15 14 V25" stroke="#4878b8" strokeWidth="1.400" /><path d="M24 12 L34 16 V25 L26 27 Z" fill="#c018a8" /></>,
  folder: <><path d="M1 9 H12 L15 13 H28 V18 L25 32 H3 Z" fill="#e8a818" stroke="#8a5c08" strokeWidth="1.500" /><path d="M9 18 H34 L27 32 H2 Z" fill="#ffd860" stroke="#8a5c08" strokeWidth="1.500" /></>,
  expr: <><path d="M1 9 H12 L15 13 H28 V18 L25 32 H3 Z" fill="#e8a818" stroke="#8a5c08" strokeWidth="1.500" /><path d="M9 18 H34 L27 32 H2 Z" fill="#ffd860" stroke="#8a5c08" strokeWidth="1.500" /><path d="M17 2 H33 M17 7 H33" stroke="#28289c" strokeWidth="2.400" /></>,
  csys: <><path d="M3 8 L16 6 V22 L3 20 Z M3 20 L14 30 L26 23 L14 14" stroke="#555" strokeWidth="2" /><path d="M3 8 V0 M0 4 L3 0 L6 4" stroke="#2828d8" strokeWidth="2" /><path d="M18 14 L29 9 M25 6 L33 8 L28 13" stroke="#189838" strokeWidth="2.600" /><path d="M18 28 L27 32 M24 28 L29 33" stroke="#d82020" strokeWidth="2.600" /></>,
  sketch: <SketchGlyph />,
  sketchOn: <SketchGlyph hot />,
  extrude: <><path d="M3 5 L17 1 L31 5 V28 H3 Z" fill="#ff9a28" stroke="#d85a08" strokeWidth="1.800" /><path d="M8 5 V27 M15 3 V27 M21 4 V27" stroke="#c84808" strokeWidth="2" /><path d="M10 7 H14 V26 H10 Z M23 7 H28 V26 H23 Z" fill="#ffd070" /><path d="M3 30 Q10 24 17 29 T32 29" stroke="#2828b0" strokeWidth="3" /></>,
  chamfer: <><path d="M19 18 L33 8 V33 L19 33 Z" fill="#a8c4f8" /><path d="M3 6 L17 1 L33 8 L19 18 Z" fill="#ffb050" stroke="#e84010" strokeWidth="2.200" /><path d="M3 6 V22 M3 6 L19 18 V33" stroke="#2828c0" strokeWidth="2.200" /><path d="M6 11 L19 23 L33 14" stroke="#e03010" strokeWidth="2" /></>,
};
const Check = () => <svg width="20" height="20" viewBox="0 0 20 20"><path d="M1 9 L6 7 L8 12 L16 1 L19 4 L8 19 L6 19 Z" fill="#10c828" stroke="#0a9a1c" /></svg>;
const Box = ({ open }) => (
  <span className="flex h-[13px] w-[13px] items-center justify-center rounded-[3px] border border-[#777] bg-white">
    <svg width="9" height="9" viewBox="0 0 9 9"><path d={open ? "M1 4.500 H8" : "M1 4.500 H8 M4.500 1 V8"} stroke="#222" strokeWidth="1.400" /></svg>
  </span>
);
const rows = [
  { i: "clock", t: "历史记录模式", k: "top" },
  { i: "views", t: "模型视图", k: "top", x: "+" },
  { i: "camera", t: "摄像机", k: "top", x: "+", c: true },
  { i: "expr", t: "用户表达式", k: "top" },
  { i: "folder", t: "模型历史记录", k: "top", x: "-" },
  { i: "csys", t: "基准坐标系", n: "(0)" },
  { i: "sketch", t: "草图", n: '(1) "SKETCH_0...' },
  { i: "extrude", t: "拉伸", n: "(2)" },
  { i: "sketch", t: "草图", n: '(3) "SKETCH_0...' },
  { i: "extrude", t: "拉伸", n: "(4)" },
  { i: "chamfer", t: "倒斜角", n: "(5)" },
  { i: "sketchOn", t: "草图", n: '(6) "SKETCH_0...', last: true },
];
const Row = ({ r, i }) => {
  const stripe = i % 2 ? "bg-[#f6f6f6]" : "bg-white";
  return (
    <div className={"flex h-[29.95px] shrink-0 border-b-2 border-[#e9e9e9] text-[18px] text-[#222] " + stripe}>
      <div className="flex w-[301px] shrink-0 items-center whitespace-nowrap border-r-2 border-[#e4e4e4]">
        {r && r.k === "top" && (
          <>
            <span className="flex w-[5px] shrink-0" />
            <span className="relative flex h-[30px] w-[16px] shrink-0 items-center justify-center">
              <i className={"absolute left-[8px] w-0 border-l border-dotted border-[#888] " + (i === 0 ? "top-[15px] h-[15px]" : i === 4 ? "top-0 h-[9px]" : "top-0 h-[30px]")} />
              {r.x && <span className="relative"><Box open={r.x === "-"} /></span>}
            </span>
            <i className={"border-t border-dotted border-[#888] " + (r.x ? "w-[6px]" : "-ml-[7px] w-[13px]")} />
            {r.c && <span className="ml-[3px] mr-px"><Check /></span>}
            <Svg s={24} className={r.c ? "" : "ml-[2px]"}>{treeIcons[r.i]}</Svg>
            <span className={r.c ? "ml-[5px]" : "ml-[4px]"}>{r.t}</span>
          </>
        )}
        {r && r.k !== "top" && (
          <>
            <span className="relative ml-[44px] flex h-[30px] w-[13px] shrink-0 items-center">
              <i className={"absolute left-0 top-0 border-l border-dotted border-[#888] " + (r.last ? "h-[15px]" : "h-[30px]")} />
              <i className="w-full border-t border-dotted border-[#888]" />
            </span>
            <span className="ml-[3px] flex h-[19px] w-[19px] shrink-0 items-center justify-center border-2 border-[#111] bg-white"><Check /></span>
            <Svg s={24} className="ml-[3px]">{treeIcons[r.i]}</Svg>
            <span className="ml-[4px]">{r.t}</span>
            <span className="ml-[7px] tracking-[0.25px]">{r.n}</span>
          </>
        )}
      </div>
      <div className="w-[151px] shrink-0 border-r-2 border-[#e9e9e9]" />
    </div>
  );
};
const Section = ({ t }) => (
  <div className="mb-px flex h-[34px] shrink-0 items-center border-b-2 border-[#9c9c9c] bg-linear-to-b from-[#f6f7f7] from-50% via-[#e2e3e4] via-55% to-[#d8d9da]">
    <span className="flex-1 pl-[10px] pt-[4px] text-[18px] font-bold tracking-[1.1px] text-black">{t}</span>
    <span className="flex h-full w-[36px] items-center justify-center border-l-2 border-[#a4a4a4]">
      <svg width="18" height="14" viewBox="0 0 18 14"><path d="M0 0 H5 L9 9 L13 0 H18 L11 14 H7 Z" fill="#555" /></svg>
    </span>
  </div>
);

/* ---------- graphics window ---------- */
const dimFont = { fontFamily: "Roboto, sans-serif", fontWeight: 300 };
const Canvas = () => (
  <svg width="1623" height="1073" viewBox="537 179 1623 1073" className="block shrink-0">
    <rect x="537" y="179" width="1623" height="1073" fill="#d3d4d6" />
    <rect x="823" y="322" width="958.500" height="480" fill="#ffcc00" />
    <rect x="823" y="801.500" width="958.500" height="451" fill="#ffa404" />
    <path d="M823 1252 V322 H1781" fill="none" stroke="#5c5840" strokeWidth="1.600" />
    <path d="M1781.500 801 V1252" stroke="#5c5840" strokeWidth="1.600" />
    <rect x="1239" y="748" width="126" height="126" rx="1" fill="#7a8040" fillOpacity=".4" />
    <path d="M823 801.500 H1781.500 V322" fill="none" stroke="#b87840" strokeWidth="1.600" />
    <path d="M823 801.500 H1781.500" fill="none" stroke="#188a08" strokeWidth="2.400" strokeDasharray="24 6 12 6" strokeDashoffset="-15" />
    <path d="M1781.500 322 V801" fill="none" stroke="#0a960a" strokeWidth="2.400" strokeDasharray="24 6 12 6" />
    <rect x="1239" y="748" width="126" height="126" rx="1" fill="none" stroke="#1296f8" strokeWidth="2.600" />

    <g stroke="#9496b8" strokeWidth="1.800">
      <path d="M1317.500 352 V405 M1317.500 369 H1604 M1613 413.700 H1687 M1669.500 414 V592 M1613 592.500 H1916" />
    </g>
    <g stroke="#7c90d0" strokeWidth="1.800">
      <path d="M1605 271.500 H1781 M1781.500 254 V314 M1790 801 H1916 M1899 593 V801 M1782 592.500 H1916" />
    </g>
    <path d="M1604.500 254 V405" stroke="#3a62c0" strokeWidth="1.800" />
    <g fill="#3060cc">
      <path d="M1319 369 L1334 366 V372 Z M1603 369 L1587 366 V372 Z M1606 271.500 L1621 268.500 V274.500 Z M1780 271.500 L1764 268.500 V274.500 Z" />
      <path d="M1669.500 415 L1666.500 431 H1672.500 Z M1669.500 591 L1666.500 575 H1672.500 Z M1899 594 L1896 610 H1902 Z M1899 800 L1896 784 H1902 Z" />
    </g>
    <g fill="#3c62c4" fontSize="25" style={dimFont}>
      <text x="1444" y="364.500" textLength="74" lengthAdjust="spacingAndGlyphs">p63:15.0</text>
      <text x="1708" y="267" textLength="65" lengthAdjust="spacingAndGlyphs">p65:9.2</text>
      <text transform="translate(1665 546) rotate(-90)" textLength="65" lengthAdjust="spacingAndGlyphs">p64:9.3</text>
      <text transform="translate(1894.500 746) rotate(-90)" textLength="74" lengthAdjust="spacingAndGlyphs">p66:10.9</text>
    </g>
    <g fill="none" stroke="#2a60d0" strokeWidth="2.200">
      <path d="M1334 414 V431 H1318 M1588 414 V431 H1604 M1334 592 V576 H1318 M1588 592 V576 H1604" />
    </g>
    <path d="M1446 414.500 H1475" stroke="#1840e0" strokeWidth="6" />
    <rect x="1317.500" y="413.700" width="287" height="178.600" fill="none" stroke="#0a0af4" strokeWidth="2.600" />
    {[[1317.500, 413.500], [1604.500, 413.500], [1317.500, 592], [1604.500, 592]].map(([x, y]) => (
      <g key={x + "-" + y}><circle cx={x} cy={y} r="6.500" fill="#2a60d0" /><circle cx={x} cy={y} r="4" fill="#0404ff" /></g>
    ))}

    <path d="M1295 811.500 H1310 M1302.500 805 V818" stroke="#6080a0" strokeWidth="1" />
    <path d="M1302 811 H1397" stroke="#d8342c" strokeWidth="5" /><path d="M1302 813 H1397" stroke="#982020" strokeWidth="1.500" />
    <path d="M1396 804 L1427 811 L1396 818 Z" fill="#e83838" /><path d="M1396 812 L1427 811 L1396 818 Z" fill="#982020" />
    <path d="M1302.300 716 V811" stroke="#2f8f2f" strokeWidth="5.400" /><path d="M1302.300 687 L1295.700 717 H1309 Z" fill="#309430" />
    <g fill="none" strokeWidth="1.500">
      <path d="M1296.500 670 L1302 677 L1307.500 670 M1302 677 V684" stroke="#3c9a1c" />
      <path d="M1431 804.500 L1442.500 819 M1442.500 804.500 L1431 819" stroke="#d83c30" />
    </g>

    <g fill="none" stroke="#d6bfa0" strokeWidth="1.800">
      <path d="M1302 1120 V1252 M1302 1199.500 H1403 V1252" />
      <path d="M1297 1084 H1307 L1297 1098 H1308" />
    </g>
    <path d="M1302 1101 L1297 1123 H1307 Z" fill="#c4c4c4" />

    <rect x="625" y="1126" width="34.500" height="34" fill="#cbcbcb" stroke="#b4b4b4" strokeWidth="1.600" />
    <circle cx="624" cy="1161" r="6.500" fill="#9a9a9a" />
    <path d="M620 1157 L624 1162 L628 1157 M624 1162 V1167" fill="none" stroke="#3a9a3a" strokeWidth="1.500" />
    <path d="M624 1113 V1155" stroke="#1048f4" strokeWidth="3.600" /><path d="M624 1102 L620.300 1117 H628 Z" fill="#1048f4" />
    <path d="M620 1089 H629 L620 1101 H630" fill="none" stroke="#4068e8" strokeWidth="1.600" />
    <path d="M631 1161 H672" stroke="#d03030" strokeWidth="3.600" /><path d="M669 1156.500 L684 1161 L669 1165.500 Z" fill="#c82828" />
    <path d="M687 1155 L697 1168 M697 1155 L687 1168" fill="none" stroke="#d84040" strokeWidth="1.600" />
  </svg>
);

/* ---------- selection bar pieces ---------- */
const Sm = ({ n, w = "w-[34px]", on }) => (
  <div className={"flex shrink-0 items-center justify-center " + w}>
    <div className={on ? "flex h-[33px] w-full items-center justify-center rounded-[4px] border-2 border-[#777] bg-white" : "flex"}><Svg s={24}>{I[n]}</Svg></div>
  </div>
);
const SmSep = ({ w }) => <div className={"flex shrink-0 justify-center " + w}><i className="h-[40px] w-[2px] border-l border-[#b4b4b4] bg-[#f4f4f4]" /></div>;

export default function App() {
  return (
    <div className="h-[1365px] w-[2160px] overflow-hidden bg-white font-['Open_Sans','Noto_Sans_CJK_SC',sans-serif]">
      <div className="relative flex h-full w-full flex-col overflow-hidden rounded-[15px] bg-[#131b22]">
        {/* title bar */}
        <div className="flex h-[35px] shrink-0 items-center bg-[linear-gradient(#000_0,#000_1px,#77777a_3px,#59595b_6px,#4a4a4c_12px,#1c1c1c_13px,#1c1c1c_32px,#000_34px)] pl-[5px]">
          <Svg s={25}><path d="M3 1 L17 5 L14 18 L6 12 Z" fill="#d01038" /><path d="M3 13 Q10 12 14 18 Q17 8 30 4 Q28 22 20 30 Q10 34 5 26 Z" fill="#38b8f4" /><path d="M14 18 Q10 24 6 26 Q14 32 20 26 Q26 18 28 8 Z" fill="#1870d8" /><path d="M1 28 Q16 38 28 22 Q35 10 29 5 Q34 14 24 22 Q14 30 1 28 Z" fill="#f4b020" /></Svg>
          <span className="ml-[7px] w-[390px] whitespace-pre text-[18px] tracking-[0.55px] text-white">NX 8.5 - 草图 - [_model3.prt （修改的） ]</span>
          <span className="ml-auto mr-[42px] text-[18.500px] font-extrabold tracking-[1.4px] text-white">SIEMENS</span>
          <div className="mr-[2px] flex gap-[6px]">
            <span className="flex h-[30px] w-[29px] items-end justify-center rounded-[4px] border border-[#777] bg-linear-to-b from-[#6a6a6c] to-[#3c3c3e] pb-[5px]"><i className="h-[4px] w-[11px] bg-white" /></span>
            <span className="flex h-[30px] w-[29px] items-center justify-center rounded-[4px] border border-[#777] bg-linear-to-b from-[#6a6a6c] to-[#3c3c3e]">
              <svg width="16" height="16" viewBox="0 0 16 16" fill="none" stroke="#fff" strokeWidth="1.800"><path d="M5 5 V1.500 H15 V10 H12" /><path d="M1 6 H11 V15 H1 Z M1 7.500 H11" /></svg>
            </span>
            <span className="flex h-[30px] w-[29px] items-center justify-center rounded-[4px] border border-[#e88070] bg-linear-to-b from-[#f08468] to-[#d83818]">
              <svg width="17" height="17" viewBox="0 0 17 17"><path d="M2 1 L15 16 M15 1 L2 16" stroke="#fff" strokeWidth="3.200" /></svg>
            </span>
          </div>
        </div>

        {/* menu bar */}
        <div className="flex h-[40px] shrink-0 items-center border-b-2 border-[#c6c6c6] bg-linear-to-b from-[#e9e9e9] to-[#dadada]">
          <div className="flex h-[28px] w-[9px] flex-col items-end justify-between">{[0, 1, 2, 3, 4].map((i) => <i key={i} className="h-[3px] w-[3px] bg-[#a8a8a8]" />)}</div>
          <Svg s={26} className="ml-[2px]"><SketchGlyph bg="#eee" /></Svg>
          <div className="ml-[8px] flex text-[18px] tracking-[-0.4px] text-black">
            {menus.map(([t, k, w]) => <span key={k} className={"shrink-0 whitespace-nowrap " + w}>{t}(<u>{k}</u>)</span>)}
          </div>
          <div className="ml-auto mr-[7px] flex gap-[4px]">
            <span className="flex h-[26px] w-[25px] items-end justify-center rounded-[5px] border-2 border-[#8a8a8a] bg-linear-to-b from-white to-[#e4e4e4] pb-[4px]"><i className="h-[3px] w-[11px] bg-[#444]" /></span>
            <span className="flex h-[26px] w-[25px] items-center justify-center rounded-[5px] border-2 border-[#8a8a8a] bg-linear-to-b from-white to-[#e4e4e4]">
              <svg width="14" height="14" viewBox="0 0 16 16" fill="none" stroke="#555" strokeWidth="2.400"><path d="M5 5 V2 H15 V10 H12" /><path d="M1 7 H11 V15 H1 Z" /></svg>
            </span>
            <span className="flex h-[26px] w-[25px] items-center justify-center rounded-[5px] border-2 border-[#c4c4c4] bg-[#e6e6e6]">
              <svg width="14" height="14" viewBox="0 0 17 17"><path d="M2 1 L15 16 M15 1 L2 16" stroke="#b8b8b8" strokeWidth="4" /></svg>
            </span>
          </div>
        </div>

        {/* standard toolbars */}
        <div className="flex h-[51px] shrink-0 bg-linear-to-b from-[#e0e0e0] to-[#d2d2d2]">
          <div className="flex h-full border-b-2 border-[#c2c2c2]">
            <Group w="w-[510px]">
              <Grip w="w-[9px]" />
              <div className="ml-[7px] flex items-center"><Svg s={36}><Flag /></Svg></div>
              <span className="ml-[5px] flex w-[84px] shrink-0 items-center whitespace-nowrap text-[18px] tracking-[0.3px] text-black">完成草图</span>
              <div className="flex w-[162px] shrink-0 items-center"><Combo w="w-[154px] h-[30px]" text="SKETCH_003" blue tight="tracking-[0.6px]" /></div>
              {many("reattach orient cubeSketch stampGray")}
              <Tri low />
            </Group>
            <Group w="w-[601px]">
              <Grip />
              <Ico n="save" /><Sep />{many("cut copy paste")}<Sep w="w-[7px]" />{many("undo redo")}<Sep w="w-[10px]" />
              <Ico n="binoc" />
              <span className="flex w-[96px] shrink-0 items-center whitespace-nowrap text-[18px] text-black">命令查找器</span>
              <Ico n="dimBolt" /><Tri w="w-[20px]" /><Sep w="w-[7px]" /><Ico n="info" /><Tri low w="w-[20px]" />
            </Group>
            <Group w="w-[439px]">
              <Grip />
              <Ico n="fit" /><Tri w="w-[19px]" /><Ico n="clip" /><Tri w="w-[17px]" /><Ico n="cube" /><Tri /><Ico n="planeOrange" /><Ico n="planeGreen" /><Tri /><Sep />
              {many("bookPlay book")}<Tri low w="w-[12px]" />
            </Group>
            <Group w="w-[375px]">
              <Grip />
              <Ico n="layers" /><Sep />{many("hand palette")}<Sep w="w-[8px]" />
              <Ico n="playDia" /><Tri w="w-[20px]" /><Sep w="w-[8px]" /><Ico n="curveRed" /><Tri w="w-[17px]" /><Ico n="ruler" /><Tri low w="w-[17px]" />
            </Group>
          </div>
        </div>

        {/* sketch toolbar */}
        <div className="flex h-[51px] shrink-0 bg-linear-to-b from-[#d6d6d6] to-[#cbcbcb]">
          <div className="flex h-full w-[1677px] border-b-2 border-r-2 border-[#bcbcbc] border-t border-t-[#f0f0f0]">
            <Grip w="w-[11px]" />
            {many("profile line arc circle fillet chamfer rect hex spline fitCurve ellipse conic plus offset")}
            <Tri w="w-[18px]" />
            {many("pattern mirrorPlus intersect")}<Sep />{many("trim extend corner")}<Sep w="w-[8px]" />
            <Ico n="dimBolt" /><Tri w="w-[18px]" /><Ico n="dimPart" /><Sep w="w-[9px]" />
            {many("para sym")}<Ico n="paraPlay" on />{many("driverAngle driverDim paraX dimAlt dimVert shapes boltAngle")}<Ico n="sun" on /><Ico n="driverCirc" />
            <Tri low w="w-[15px]" />
          </div>
        </div>

        {/* body */}
        <div className="flex h-[1075px] shrink-0 border-t-2 border-[#8c8c8c]">
          <div className="flex w-[49px] shrink-0 flex-col items-end bg-[#b0b0b0] pt-[24px]">
            <SideTab n="asm" />
            <SideTab n="cons" cls="mt-[3px]" />
            <SideTab n="part" active />
            <SideTab n="books" />
            <SideTab n="info" cls="mt-[21px]" />
            <SideTab n="web" cls="mt-[21px]" />
            <SideTab n="clock" cls="mt-[21px]" />
            <SideTab n="people" cls="mt-[3px]" />
          </div>
          <div className="flex w-[488px] shrink-0 flex-col border-r-2 border-[#6c6c6c] bg-[#ebebeb] pl-[14px] pr-[14px]">
            <div className="flex h-[45px] shrink-0 items-center pl-[9px]">
              <svg width="16" height="16" viewBox="0 0 16 16"><path d="M0 15 H4 L6 11" stroke="#000" strokeWidth="1.800" fill="none" /><path d="M3 8 L7 2 L14 1 L14 8 L9 13 L4 13 Z" fill="#e8d820" stroke="#111" strokeWidth="2" /><path d="M7 3 L11 7" stroke="#fff" strokeWidth="2" /></svg>
              <span className="ml-[20px] text-[18px] font-bold tracking-[1.4px] text-black">部件导航器</span>
            </div>
            <div className="flex h-[898px] shrink-0 flex-col overflow-hidden border-2 border-[#828282] bg-white">
              <div className="flex h-[30px] shrink-0 items-center border-b-2 border-[#8e8e8e] bg-linear-to-b from-[#f7f8f8] from-45% via-[#e4e6e7] via-50% to-[#dadcde] text-[18px] text-black">
                <span className="flex h-full w-[301px] shrink-0 items-center border-r-2 border-[#bbb] pl-[9px] pt-px">名称<svg className="ml-[25px]" width="16" height="9" viewBox="0 0 16 9"><path d="M0 9 L8 0 L16 9 Z" fill="#111" /></svg></span>
                <span className="flex h-full w-[151px] shrink-0 items-center border-r-2 border-[#bbb] pl-[7px] pt-px">附注</span>
              </div>
              {Array.from({ length: 29 }, (_, i) => <Row key={i} r={rows[i]} i={i} />)}
            </div>
            <div className="flex h-[18px] shrink-0 items-center justify-between">
              <i className="h-[3px] w-[182px] border-t-2 border-[#c2c2c2] bg-white" /><i className="h-[9px] w-[79px] border border-r-[#888] border-b-2 border-b-[#888] border-[#f4f4f4] bg-[#d2d2d2]" /><i className="h-[3px] w-[182px] border-t-2 border-[#c2c2c2] bg-white" />
            </div>
            <Section t="相依性" /><Section t="细节" /><Section t="预览" />
          </div>
          <Canvas />
        </div>

        {/* selection bar */}
        <div className="flex h-[46px] shrink-0 items-center border-b-2 border-t-2 border-b-[#c4c4c4] border-t-[#8a8a8a] bg-linear-to-b from-[#bdbdbd] via-[#d2d2d2] to-[#dcdcdc] pl-[8px]">
          <Combo w="w-[214px] h-[29px]" text="没有选择过滤器" blue />
          <div className="ml-[13px] flex"><Combo w="w-[226px] h-[29px]" text="仅在工作部件内" /></div>
          <Sm n="selGray" w="w-[46px]" /><SmSep w="w-[4px]" />
          <Sm n="funnelGray" w="w-[35px]" /><Sm n="funnelRed" w="w-[33px]" /><Tri w="w-[10px]" /><Sm n="undoTarget" w="w-[39px]" /><SmSep w="w-[8px]" />
          <Sm n="marquee" w="w-[34px]" /><Tri w="w-[21px]" /><SmSep w="w-[5px]" />
          <Sm n="solidA" w="w-[36px]" /><Sm n="solidB" w="w-[34px]" /><SmSep w="w-[9px]" />
          <Sm n="snapOn" on w="w-[34px]" /><Sm n="snapRot" w="w-[35px]" />
          <Sm n="snapEnd" on /><Sm n="snapMid" on /><Sm n="snapCtrl" w="w-[35px]" /><Sm n="snapInt" w="w-[35px]" />
          <Sm n="snapCen" on /><Sm n="snapQuad" w="w-[35px]" /><Sm n="snapPt" on /><Sm n="snapCrv" on w="w-[35px]" />
          <Sm n="snapFace" w="w-[33px]" /><SmSep w="w-[9px]" /><Sm n="gridPt" w="w-[34px]" />
          <div className="ml-auto mr-[8px] flex h-full items-end"><Tri low w="w-[10px]" /></div>
        </div>

        {/* status bar */}
        <div className="flex h-[34px] shrink-0 items-center border-b-2 border-t border-b-[#aaa] border-t-[#eee] bg-[#d9d9d9]">
          <div className="h-full w-[994px] shrink-0 border-r-2 border-[#bdbdbd]" />
          <span className="w-[995px] shrink-0 pl-[4px] text-[18px] font-bold tracking-[1.5px] text-black">草图已完全约束</span>
          <i className="h-full w-[30px] shrink-0 border-l-2 border-[#bdbdbd]" /><i className="h-full w-[54px] shrink-0 border-l-2 border-[#bdbdbd]" />
          <div className="flex h-full flex-1 items-center gap-[8px] border-l-2 border-[#bdbdbd] pl-[4px]">
            <Svg s={22}><Flag /></Svg>
            <Svg s={22}><path d="M2 9 V2 H9 M25 2 H32 V9 M32 25 V32 H25 M9 32 H2 V25" stroke="#666" strokeWidth="3" /><path d="M7 7 H27 V28 H7 Z" fill="#fff" stroke="#555" strokeWidth="3" /><path d="M11 12 H23 V24 H11 Z" fill="#2878e0" /></Svg>
          </div>
        </div>

        {/* desktop strip */}
        <div className="flex-1 bg-[radial-gradient(ellipse_140px_60px_at_1952px_0,#2a5654,transparent),radial-gradient(ellipse_420px_100px_at_1750px_20px,#17333f,transparent),radial-gradient(ellipse_200px_60px_at_620px_20px,#14292f,transparent),linear-gradient(#121b22,#121a21)]" />

        {/* scope drop-down */}
        <div className="absolute left-[235px] top-[1292px] flex h-[73px] w-[227px] flex-col border-2 border-b-0 border-[#9a9a9a] bg-white pt-[2px] text-[18px] leading-[23px] text-black">
          <span className="h-[22px] pl-[2px]">整个装配</span>
          <span className="h-[23px] bg-[#0078d7] pl-[2px] text-white">仅在工作部件内</span>
          <span className="h-[23px] pl-[2px]">仅在活动草图内</span>
        </div>

        {/* tooltip */}
        <div className="absolute left-[426px] top-[1181px] flex h-[75px] w-[329px] flex-col rounded-[8px] border-2 border-[#a8a8a8] bg-linear-to-b from-[#f6f6f6]/90 to-[#e2e2e2]/90 pl-[9px] shadow-[3px_4px_4px_rgba(0,0,0,0.55)]">
          <span className="mt-[5px] text-[18px] font-bold leading-[31px] tracking-[1.6px] text-[#222238]">选择范围</span>
          <span className="whitespace-nowrap text-[18px] leading-[32px] tracking-[-0.1px] text-[#2a2a2a]">将选择范围过滤至显示模型的一部分。</span>
        </div>

        {/* pointer arrow */}
        <svg className="absolute left-[172px] top-[1188px]" width="70" height="76" viewBox="0 0 70 76"><path d="M5 8 Q8 3 12 7 L52 54 L55 48 L61 71 L41 61 L48 58 Z" fill="#ff5566" /></svg>
      </div>
    </div>
  );
}
